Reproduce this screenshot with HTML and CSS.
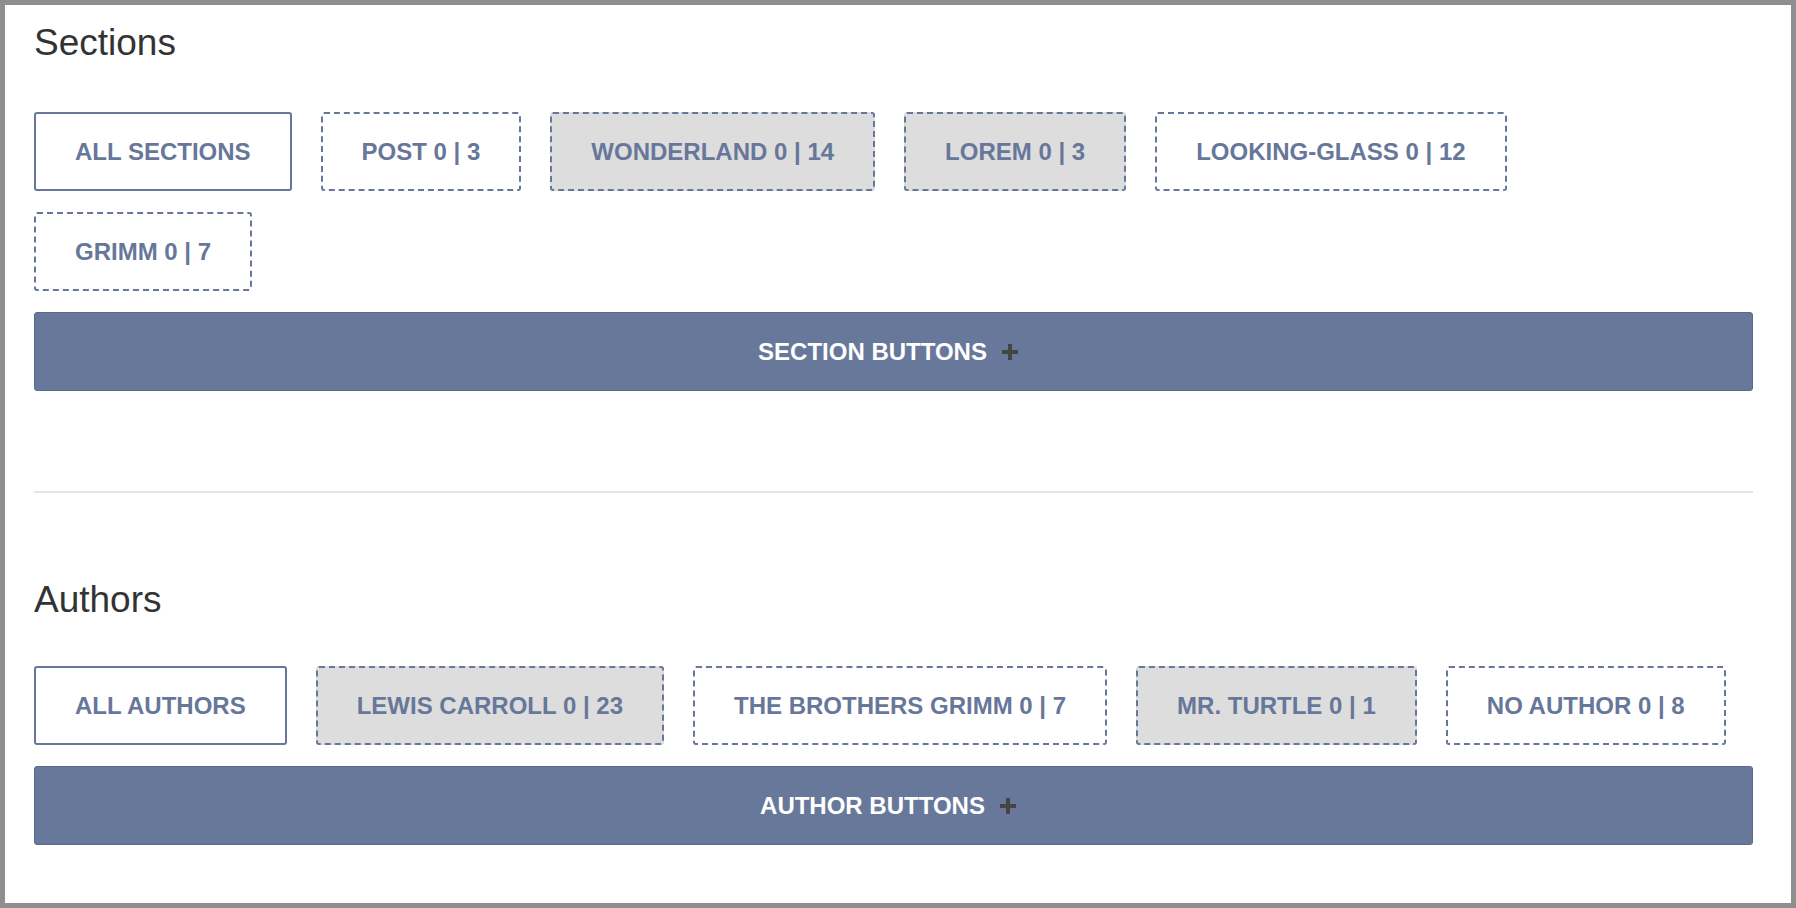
FILE: index.html
```html
<!DOCTYPE html>
<html lang="en">
<head>
<meta charset="utf-8">
<title>Sections and Authors</title>
<link rel="stylesheet" href="styles.css">
</head>
<body>
<main class="page">
  <section class="group">
    <h2 class="group-title">Sections</h2>
    <div class="chips">
      <button class="chip chip-all">ALL SECTIONS</button>
      <button class="chip chip-dashed">POST 0 | 3</button>
      <button class="chip chip-dashed chip-filled">WONDERLAND 0 | 14</button>
      <button class="chip chip-dashed chip-filled">LOREM 0 | 3</button>
      <button class="chip chip-dashed">LOOKING-GLASS 0 | 12</button>
      <button class="chip chip-dashed">GRIMM 0 | 7</button>
    </div>
    <button class="bar">SECTION BUTTONS<svg class="plus" width="18" height="18" viewBox="0 0 18 18"><rect x="7" y="1" width="4" height="16" fill="#444"/><rect x="1" y="7" width="16" height="4" fill="#444"/></svg></button>
  </section>

  <div class="divider"></div>

  <section class="group group-authors">
    <h2 class="group-title">Authors</h2>
    <div class="chips">
      <button class="chip chip-all">ALL AUTHORS</button>
      <button class="chip chip-dashed chip-filled">LEWIS CARROLL 0 | 23</button>
      <button class="chip chip-dashed">THE BROTHERS GRIMM 0 | 7</button>
      <button class="chip chip-dashed chip-filled">MR. TURTLE 0 | 1</button>
      <button class="chip chip-dashed">NO AUTHOR 0 | 8</button>
    </div>
    <button class="bar">AUTHOR BUTTONS<svg class="plus" width="18" height="18" viewBox="0 0 18 18"><rect x="7" y="1" width="4" height="16" fill="#444"/><rect x="1" y="7" width="16" height="4" fill="#444"/></svg></button>
  </section>
</main>
</body>
</html>
```

FILE: styles.css
```css
html, body {
  margin: 0;
  padding: 0;
}

body {
  box-sizing: border-box;
  height: 908px;
  overflow: hidden;
  border: 5px solid #8f8f8f;
  background: #ffffff;
  font-family: "Liberation Sans", Arial, Helvetica, sans-serif;
}

.page {
  padding: 18px 38px 0 29px;
}

.group-title {
  margin: 0 0 49px 0;
  font-size: 37px;
  line-height: 40px;
  font-weight: 400;
  color: #333333;
}

.group-authors .group-title {
  margin-top: 87px;
  margin-bottom: 46px;
}

.chips {
  display: flex;
  flex-wrap: wrap;
  column-gap: 29px;
  row-gap: 21px;
}

.chip {
  box-sizing: border-box;
  height: 79px;
  padding: 0 39px;
  margin: 0;
  background: #ffffff;
  border: 2px solid #67779a;
  border-radius: 3px;
  font-family: "Liberation Sans", Arial, Helvetica, sans-serif;
  font-size: 24px;
  font-weight: 700;
  color: #67779a;
  line-height: 75px;
  white-space: nowrap;
}

.chip-dashed {
  border-style: dashed;
}

.chip-filled {
  background: #dddddd;
}

.bar {
  display: flex;
  align-items: center;
  justify-content: center;
  box-sizing: border-box;
  width: 100%;
  height: 79px;
  margin: 21px 0 0 0;
  padding: 0;
  background: #68789a;
  border: 1px solid #5a6a8b;
  border-radius: 3px;
  font-family: "Liberation Sans", Arial, Helvetica, sans-serif;
  font-size: 24px;
  font-weight: 700;
  color: #ffffff;
}

.group-authors .bar {
  margin-top: 21px;
}

.plus {
  display: block;
  margin-left: 14px;
  margin-right: 10px;
}

.divider {
  height: 2px;
  margin-top: 100px;
  background: #e5e5e5;
}
```
